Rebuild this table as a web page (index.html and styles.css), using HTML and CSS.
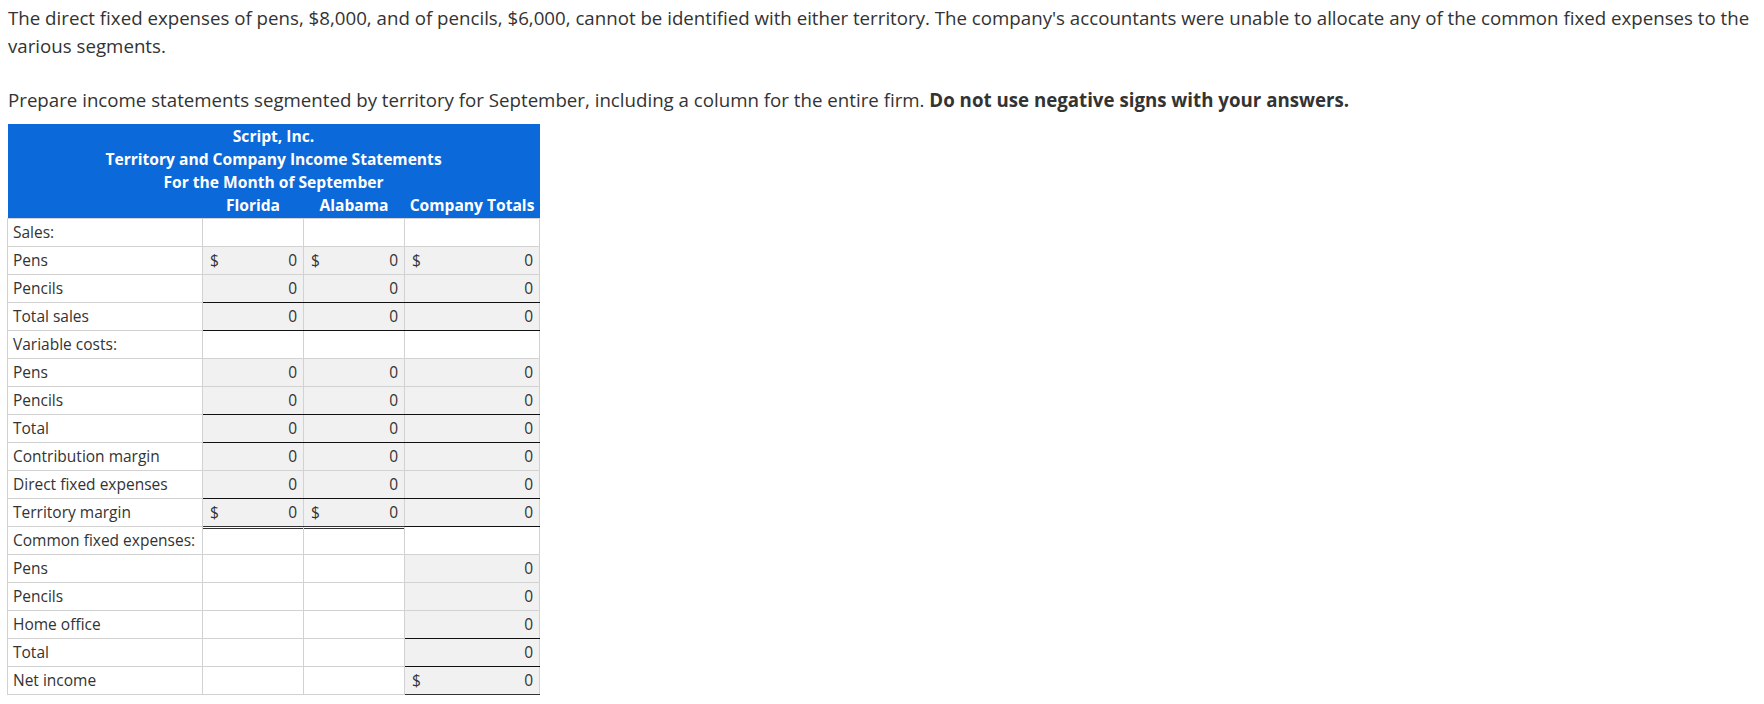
FILE: index.html
```html
<!DOCTYPE html>
<html>
<head>
<meta charset="utf-8">
<link rel="stylesheet" href="styles.css">
</head>
<body>
<div class="page">
  <p class="intro">The direct fixed expenses of pens, $8,000, and of pencils, $6,000, cannot be identified with either territory. The company's accountants were unable to allocate any of the common fixed expenses to the various segments.</p>
  <p class="task">Prepare income statements segmented by territory for September, including a column for the entire firm. <strong>Do not use negative signs with your answers.</strong></p>
  <table class="stmt">
    <colgroup>
      <col class="c-label">
      <col class="c-fl">
      <col class="c-al">
      <col class="c-co">
    </colgroup>
    <thead>
      <tr class="title first"><th colspan="4">Script, Inc.</th></tr>
      <tr class="title"><th colspan="4">Territory and Company Income Statements</th></tr>
      <tr class="title"><th colspan="4">For the Month of September</th></tr>
      <tr class="cols last"><th></th><th>Florida</th><th>Alabama</th><th>Company Totals</th></tr>
    </thead>
    <tbody>
      <tr><td class="lbl">Sales:</td><td></td><td></td><td></td></tr>
      <tr><td class="lbl">Pens</td>
        <td class="in"><div class="amt"><span>$</span><span>0</span></div></td>
        <td class="in"><div class="amt"><span>$</span><span>0</span></div></td>
        <td class="in"><div class="amt"><span>$</span><span>0</span></div></td></tr>
      <tr><td class="lbl">Pencils</td>
        <td class="in ul"><div class="amt"><span></span><span>0</span></div></td>
        <td class="in ul"><div class="amt"><span></span><span>0</span></div></td>
        <td class="in ul"><div class="amt"><span></span><span>0</span></div></td></tr>
      <tr><td class="lbl">Total sales</td>
        <td class="in ul"><div class="amt"><span></span><span>0</span></div></td>
        <td class="in ul"><div class="amt"><span></span><span>0</span></div></td>
        <td class="in ul"><div class="amt"><span></span><span>0</span></div></td></tr>
      <tr><td class="lbl">Variable costs:</td><td></td><td></td><td></td></tr>
      <tr><td class="lbl">Pens</td>
        <td class="in"><div class="amt"><span></span><span>0</span></div></td>
        <td class="in"><div class="amt"><span></span><span>0</span></div></td>
        <td class="in"><div class="amt"><span></span><span>0</span></div></td></tr>
      <tr><td class="lbl">Pencils</td>
        <td class="in ul"><div class="amt"><span></span><span>0</span></div></td>
        <td class="in ul"><div class="amt"><span></span><span>0</span></div></td>
        <td class="in ul"><div class="amt"><span></span><span>0</span></div></td></tr>
      <tr><td class="lbl">Total</td>
        <td class="in ul"><div class="amt"><span></span><span>0</span></div></td>
        <td class="in ul"><div class="amt"><span></span><span>0</span></div></td>
        <td class="in ul"><div class="amt"><span></span><span>0</span></div></td></tr>
      <tr><td class="lbl">Contribution margin</td>
        <td class="in"><div class="amt"><span></span><span>0</span></div></td>
        <td class="in"><div class="amt"><span></span><span>0</span></div></td>
        <td class="in"><div class="amt"><span></span><span>0</span></div></td></tr>
      <tr><td class="lbl">Direct fixed expenses</td>
        <td class="in ul"><div class="amt"><span></span><span>0</span></div></td>
        <td class="in ul"><div class="amt"><span></span><span>0</span></div></td>
        <td class="in ul"><div class="amt"><span></span><span>0</span></div></td></tr>
      <tr><td class="lbl">Territory margin</td>
        <td class="in ul dbl"><div class="amt"><span>$</span><span>0</span></div></td>
        <td class="in ul dbl"><div class="amt"><span>$</span><span>0</span></div></td>
        <td class="in ul"><div class="amt"><span></span><span>0</span></div></td></tr>
      <tr><td class="lbl">Common fixed expenses:</td><td></td><td></td><td></td></tr>
      <tr><td class="lbl">Pens</td><td></td><td></td>
        <td class="in"><div class="amt"><span></span><span>0</span></div></td></tr>
      <tr><td class="lbl">Pencils</td><td></td><td></td>
        <td class="in"><div class="amt"><span></span><span>0</span></div></td></tr>
      <tr><td class="lbl">Home office</td><td></td><td></td>
        <td class="in ul"><div class="amt"><span></span><span>0</span></div></td></tr>
      <tr><td class="lbl">Total</td><td></td><td></td>
        <td class="in ul"><div class="amt"><span></span><span>0</span></div></td></tr>
      <tr><td class="lbl">Net income</td><td></td><td></td>
        <td class="in ul dbl"><div class="amt"><span>$</span><span>0</span></div></td></tr>
    </tbody>
  </table>
</div>
</body>
</html>
```
FILE: styles.css
```css
html, body {
  margin: 0;
  padding: 0;
  background: #ffffff;
}
body {
  font-family: "Open Sans", "Noto Sans", sans-serif;
  font-size: 16px;
  color: #333333;
}
.page {
  padding: 4px 0 0 7px;
}
.intro, .task {
  margin: 0;
  font-size: 18.7px;
  line-height: 28px;
  padding-left: 1px;
}
.intro {
  margin-bottom: 26px;
}
.task {
  margin-bottom: 10px;
}
.task strong {
  font-weight: 700;
}
.stmt {
  border-collapse: collapse;
  table-layout: fixed;
  width: 532px;
  font-size: 15.5px;
}
.c-label { width: 195px; }
.c-fl { width: 101px; }
.c-al { width: 101px; }
.c-co { width: 135px; }
.stmt thead th {
  background: #0b69d9;
  color: #ffffff;
  font-weight: 700;
  font-size: 15.6px;
  line-height: 23px;
  padding: 0;
  text-align: center;
  white-space: nowrap;
}
.stmt thead tr.first th { padding-top: 1px; }
.stmt thead tr.last th { padding-bottom: 1px; }
.stmt td {
  border: 1px solid #d2d2d2;
  height: 27px;
  padding: 0;
  line-height: 27px;
  vertical-align: middle;
  white-space: nowrap;
}
.stmt td.lbl {
  padding-left: 5px;
}
.stmt td.in {
  background: #f1f1f1;
}
.stmt td.ul {
  border-bottom: 1px solid #111111;
}
.stmt td.dbl {
  position: relative;
  border-bottom-color: #333333;
}
.stmt td.dbl::after {
  content: "";
  position: absolute;
  left: 0;
  right: 0;
  bottom: -3px;
  height: 1px;
  background: #333333;
}
.amt {
  display: flex;
  justify-content: space-between;
  padding: 0 6px 0 7px;
}
```
